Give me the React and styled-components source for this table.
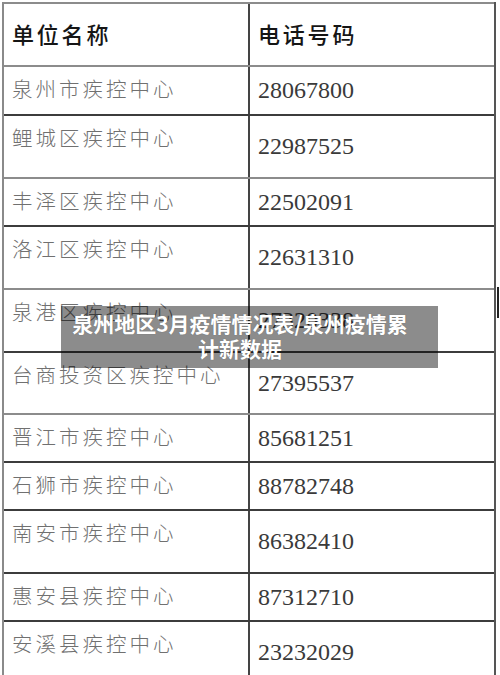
import React from 'react';
import styled, { createGlobalStyle } from 'styled-components';

const GlobalStyle = createGlobalStyle`
  html, body {
    margin: 0;
    padding: 0;
    background: #ffffff;
    overflow: hidden;
  }
  body {
    width: 500px;
    height: 675px;
    font-family: "Noto Sans CJK SC", "Noto Sans", sans-serif;
  }
`;

const Page = styled.div`
  position: relative;
  width: 500px;
  height: 675px;
  padding: 2px 4px 0 2px;
  box-sizing: border-box;
  overflow: hidden;
  background: #ffffff;
`;

const Table = styled.div`
  border-left: 2px solid #8a8a8a;
  border-right: 2px solid #555;
  display: flex;
  flex-direction: column;
`;

const Row = styled.div`
  display: grid;
  grid-template-columns: 246px 1fr;
  height: ${(p) => p.$h}px;
  box-sizing: border-box;
  border-top: 2px solid ${(p) => (p.$tone === 'grey' ? '#8c8c8c' : '#3c3c3c')};
  flex-shrink: 0;
`;

const NameCell = styled.div`
  display: flex;
  align-items: ${(p) => (p.$head ? 'center' : 'flex-start')};
  padding: ${(p) => (p.$head ? '0 0 4px 8px' : '8px 0 0 8px')};
  border-right: 2px solid #444;
  font-family: "Noto Sans CJK SC", "Noto Sans CJK TC", sans-serif;
  font-size: ${(p) => (p.$head ? '22px' : '20.5px')};
  font-weight: ${(p) => (p.$head ? 500 : 300)};
  letter-spacing: ${(p) => (p.$head ? '2.8px' : '3px')};
  line-height: 26px;
  color: ${(p) => (p.$head ? '#151515' : '#707070')};
  white-space: nowrap;
`;

const PhoneCell = styled.div`
  display: flex;
  align-items: center;
  padding-left: 8px;
  padding-bottom: ${(p) => (p.$head ? '4px' : '0')};
  font-family: ${(p) =>
    p.$head
      ? '"Noto Sans CJK SC", "Noto Sans CJK TC", sans-serif'
      : '"Liberation Serif", "DejaVu Serif", serif'};
  font-size: ${(p) => (p.$head ? '22px' : '24px')};
  font-weight: ${(p) => (p.$head ? 500 : 400)};
  letter-spacing: ${(p) => (p.$head ? '2.8px' : '0')};
  color: ${(p) => (p.$head ? '#151515' : '#3a3a3a')};
  white-space: nowrap;
`;

const Caption = styled.div`
  position: absolute;
  left: 61px;
  top: 306px;
  width: 377px;
  height: 62px;
  box-sizing: border-box;
  padding: 5px 19px 0 0;
  background: rgba(0, 0, 0, 0.45);
  color: #ffffff;
  font-family: "Noto Sans CJK SC", "Noto Sans", sans-serif;
  font-weight: 700;
  font-size: 21px;
  line-height: 25px;
  text-align: center;
  text-shadow: 0 0 1px rgba(0, 0, 0, 0.3);
`;

const CaptionLine = styled.div`
  white-space: nowrap;
`;

const EdgeMark = styled.div`
  position: absolute;
  left: 497px;
  top: 287px;
  width: 2px;
  height: 31px;
  background: #222;
`;

const rows = [
  { name: '泉州市疾控中心', phone: '28067800', h: 49, tone: 'grey' },
  { name: '鲤城区疾控中心', phone: '22987525', h: 63, tone: 'dark' },
  { name: '丰泽区疾控中心', phone: '22502091', h: 48, tone: 'grey' },
  { name: '洛江区疾控中心', phone: '22631310', h: 63, tone: 'dark' },
  { name: '泉港区疾控中心', phone: '27320338', h: 63, tone: 'grey' },
  { name: '台商投资区疾控中心', phone: '27395537', h: 62, tone: 'dark' },
  { name: '晋江市疾控中心', phone: '85681251', h: 48, tone: 'grey' },
  { name: '石狮市疾控中心', phone: '88782748', h: 48, tone: 'dark' },
  { name: '南安市疾控中心', phone: '86382410', h: 63, tone: 'dark' },
  { name: '惠安县疾控中心', phone: '87312710', h: 48, tone: 'dark' },
  { name: '安溪县疾控中心', phone: '23232029', h: 63, tone: 'dark' },
];

export default function App() {
  return (
    <>
      <GlobalStyle />
      <Page>
        <Table>
          <Row $h={63} $tone="grey">
            <NameCell $head>单位名称</NameCell>
            <PhoneCell $head>电话号码</PhoneCell>
          </Row>
          {rows.map((r) => (
            <Row key={r.name} $h={r.h} $tone={r.tone}>
              <NameCell>{r.name}</NameCell>
              <PhoneCell>{r.phone}</PhoneCell>
            </Row>
          ))}
        </Table>
        <EdgeMark />
        <Caption>
          <CaptionLine>泉州地区3月疫情情况表/泉州疫情累</CaptionLine>
          <CaptionLine>计新数据</CaptionLine>
        </Caption>
      </Page>
    </>
  );
}
